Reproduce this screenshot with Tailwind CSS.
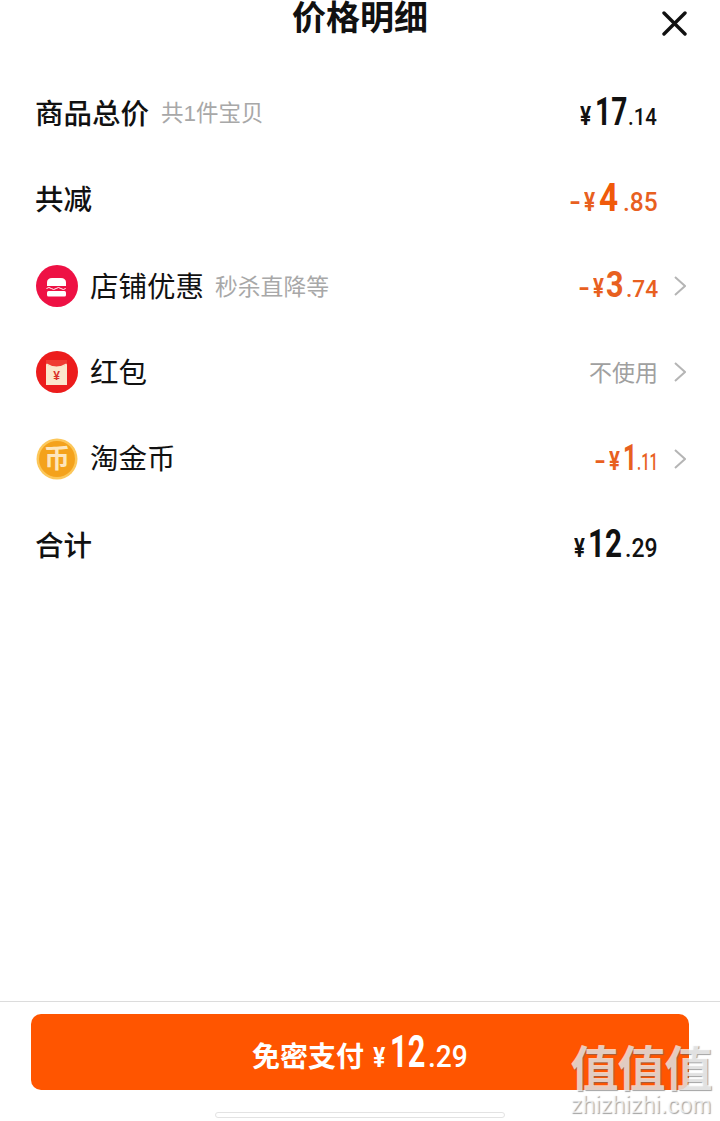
<!DOCTYPE html>
<html lang="zh">
<head>
<meta charset="utf-8">
<script src="https://cdn.jsdelivr.net/npm/@tailwindcss/browser@4"></script>
</head>
<body class="m-0 bg-white">
<div class="relative flex h-[1121px] w-[720px] flex-col overflow-hidden bg-white text-[#111] font-['Liberation_Sans','Noto_Sans_CJK_SC',sans-serif]">
  <header class="relative flex h-[36px] shrink-0 items-center justify-center">
    <h1 class="text-[34px] leading-[36px] font-bold">价格明细</h1>
    <svg class="absolute left-[662px] top-[11px]" width="25" height="25" viewBox="0 0 25 25" fill="none" stroke="#111" stroke-width="3.400" stroke-linecap="round"><path d="M2 2 23 23M23 2 2 23"/></svg>
  </header>

  <main class="flex flex-1 flex-col pt-[34px]">
    <div class="flex h-[86.4px] items-center justify-between pl-[36px] pr-[63px]">
      <div class="flex items-center gap-[12px]"><span class="-ml-[1px] pt-[2px] text-[28.500px] font-medium">商品总价</span><span class="pt-[2px] text-[22.500px] text-[#a8a8a8]">共1件宝贝</span></div>
      <div class="-mt-[2px] flex items-baseline font-bold font-['Roboto',sans-serif]"><span class="w-[15px] origin-left scale-x-[0.8] text-[26px]">¥</span><span class="w-[33px] origin-left scale-x-[0.74] text-[38px]">17</span><span class="w-[29px] origin-left scale-x-[0.85] text-[24px] font-medium">.14</span></div>
    </div>
    <div class="flex h-[86.4px] items-center justify-between pl-[36px] pr-[63px]">
      <span class="-ml-[1px] pt-[2px] text-[28.500px] font-medium">共减</span>
      <div class="-mt-[2px] flex items-baseline font-bold text-[#e8601f] font-['Roboto',sans-serif]"><span class="w-[15px] origin-left scale-x-[1.2] text-[26px]">-</span><span class="w-[15px] origin-left scale-x-[0.8] text-[26px]">¥</span><span class="w-[24px] origin-left scale-x-[0.88] text-[38px] text-[#f05a0a]">4</span><span class="w-[34px] origin-left scale-x-[0.98] text-[25px] font-medium">.85</span></div>
    </div>
    <div class="flex h-[86.4px] items-center justify-between pl-[36px] pr-[34px]">
      <div class="flex items-center">
        <svg class="mr-[12px]" width="42" height="42" viewBox="0 0 42 42"><circle cx="21" cy="21" r="21" fill="#ee1144"/><path d="M11 21v-3.500C11 14.500 13 13 16 13h9c3 0 5 1.500 5 4.500V21z" fill="#fff"/><path d="M10.500 23.500q2.400-2 4.800 0t4.800 0 4.800 0 4.800 0" fill="none" stroke="#fff" stroke-width="1"/><rect x="11" y="26" width="19" height="5.500" rx="1.500" fill="#fff"/></svg>
        <span class="pt-[2px] text-[28.500px]">店铺优惠</span><span class="ml-[11px] pt-[2px] text-[22.800px] text-[#a8a8a8]">秒杀直降等</span>
      </div>
      <div class="flex items-center gap-[16px]">
        <div class="-mt-[2px] flex items-baseline font-bold text-[#e8601f] font-['Roboto',sans-serif]"><span class="w-[15px] origin-left scale-x-[1.2] text-[26px]">-</span><span class="w-[13px] origin-left scale-x-[0.78] text-[26px]">¥</span><span class="w-[20px] origin-left scale-x-[0.85] text-[36px]">3</span><span class="w-[32px] origin-left scale-x-[0.95] text-[24px] font-medium">.74</span></div>
        <svg width="12" height="20" viewBox="0 0 12 20" fill="none" stroke="#b5b5b5" stroke-width="2"><path d="M1 1 11 10 1 19"/></svg>
      </div>
    </div>
    <div class="flex h-[86.4px] items-center justify-between pl-[36px] pr-[34px]">
      <div class="flex items-center">
        <svg class="mr-[12px]" width="42" height="42" viewBox="0 0 42 42"><circle cx="21" cy="21" r="21" fill="#ec1c1c"/><path d="M10 10h21v24H10z" fill="#fbe6cc"/><path d="M10 9h21v4c-3 2-7 3-10.500 3S13 15 10 13z" fill="#ef3a32"/><path d="M10.500 13c3 2 7 3 10 3s7-1 10-3" fill="none" stroke="#fbe6cc" stroke-width="1.200"/><text x="20.500" y="29" text-anchor="middle" font-size="12" font-weight="700" fill="#d9302a" font-family="Liberation Sans">¥</text></svg>
        <span class="pt-[2px] text-[28.500px]">红包</span>
      </div>
      <div class="flex items-center gap-[16px]">
        <span class="pt-[2px] text-[23px] text-[#a0a0a0]">不使用</span>
        <svg width="12" height="20" viewBox="0 0 12 20" fill="none" stroke="#b5b5b5" stroke-width="2"><path d="M1 1 11 10 1 19"/></svg>
      </div>
    </div>
    <div class="flex h-[86.4px] items-center justify-between pl-[36px] pr-[34px]">
      <div class="flex items-center">
        <svg class="mr-[12px]" width="42" height="42" viewBox="0 0 42 42"><circle cx="21" cy="21" r="20.500" fill="#fcc75a"/><circle cx="21" cy="21" r="18" fill="#f4a21c"/><text x="21" y="30" text-anchor="middle" font-size="26" font-weight="700" fill="#fde6bd" font-family="Noto Sans CJK SC">币</text></svg>
        <span class="pt-[2px] text-[28.500px]">淘金币</span>
      </div>
      <div class="flex items-center gap-[16px]">
        <div class="-mt-[2px] flex items-baseline font-bold text-[#e8601f] font-['Roboto',sans-serif]"><span class="w-[15px] origin-left scale-x-[1.2] text-[26px]">-</span><span class="w-[14px] origin-left scale-x-[0.78] text-[26px]">¥</span><span class="w-[14px] origin-left scale-x-[0.68] text-[36px]">1</span><span class="w-[21px] origin-left scale-x-[0.62] text-[24px] font-medium">.11</span></div>
        <svg width="12" height="20" viewBox="0 0 12 20" fill="none" stroke="#b5b5b5" stroke-width="2"><path d="M1 1 11 10 1 19"/></svg>
      </div>
    </div>
    <div class="flex h-[86.4px] items-center justify-between pl-[36px] pr-[63px]">
      <span class="-ml-[1px] pt-[2px] text-[28.500px] font-medium">合计</span>
      <div class="-mt-[2px] flex items-baseline font-bold font-['Roboto',sans-serif]"><span class="w-[14px] origin-left scale-x-[0.78] text-[26px]">¥</span><span class="w-[37px] origin-left scale-x-[0.78] text-[38px]">12</span><span class="w-[32px] origin-left scale-x-[0.92] text-[25px] font-medium">.29</span></div>
    </div>
  </main>

  <footer class="h-[120px] shrink-0 border-t border-[#dcdcdc] px-[31px] pt-[12px]">
    <button class="flex h-[76px] w-[658px] items-center justify-center rounded-[10px] bg-[#ff5500] text-white">
      <span class="flex items-baseline font-bold"><span class="mr-[8px] text-[28px]">免密支付</span><span class="w-[18px] origin-left scale-x-[0.8] text-[28px] font-['Roboto',sans-serif]">¥</span><span class="w-[38px] origin-left scale-x-[0.7] text-[44px] font-['Roboto',sans-serif]">12</span><span class="w-[40px] origin-left scale-x-[0.88] text-[32px] font-medium font-['Roboto',sans-serif]">.29</span></span>
    </button>
    <div class="mx-auto mt-[22px] h-[6px] w-[290px] rounded-full border border-[#e3e3e3] bg-white"></div>
  </footer>

  <div class="absolute left-[566px] top-[1040px] flex w-[150px] flex-col items-center text-white/70 [text-shadow:1px_1px_1px_rgba(100,100,100,0.6)]">
    <span class="text-[48px] leading-[50px] font-bold tracking-[-1px] font-['Noto_Sans_CJK_SC',sans-serif]">值值值</span>
    <span class="mt-[5px] text-[23px] leading-[20px] tracking-[0.200px] font-['Liberation_Sans',sans-serif]">zhizhizhi.com</span>
  </div>
</div>
</body>
</html>
